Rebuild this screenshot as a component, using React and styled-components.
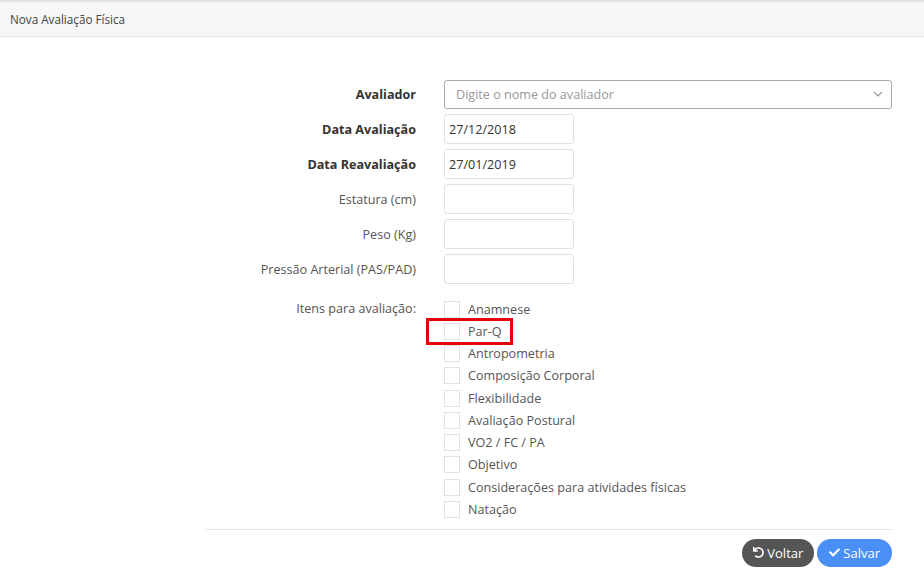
import React from "react";
import styled, { createGlobalStyle } from "styled-components";
import { FaUndo, FaCheck } from "react-icons/fa";

const GlobalStyle = createGlobalStyle`
  html, body {
    margin: 0;
    padding: 0;
    background: #ffffff;
    font-family: "Open Sans", "Liberation Sans", sans-serif;
    color: #333333;
  }
  * {
    box-sizing: border-box;
  }
`;

const Page = styled.div`
  width: 924px;
  min-height: 577px;
  background: #ffffff;
`;

const Header = styled.div`
  height: 37px;
  border-top: 2px solid #e1e2e8;
  border-bottom: 1px solid #e3e3e3;
  background: #f7f7f7;
  padding-left: 10px;
  display: flex;
  align-items: center;
  font-size: 11.7px;
  color: #444444;
`;

const Body = styled.div`
  padding: 42px 32px 0 205px;
`;

const Form = styled.div`
  display: flex;
  flex-direction: column;
  gap: 5px;
`;

const Row = styled.div`
  display: grid;
  grid-template-columns: 211px 1fr;
  column-gap: 28px;
  align-items: center;
  height: 30px;
`;

const Label = styled.label`
  text-align: right;
  font-size: 12.6px;
  font-weight: ${(p) => (p.$bold ? 700 : 400)};
  color: ${(p) => (p.$bold ? "#333333" : "#555555")};
`;

const SelectBox = styled.div`
  height: 29px;
  border: 1px solid #a9a9a9;
  border-radius: 3px;
  display: flex;
  align-items: center;
  justify-content: space-between;
  padding: 0 8px 0 11px;
  font-size: 12.6px;
  color: #999999;
`;

const Input = styled.div`
  width: 130px;
  height: 30px;
  border: 1px solid #e0e0e0;
  border-radius: 3px;
  display: flex;
  align-items: center;
  padding-left: 4px;
  font-size: 12.6px;
  color: #333333;
`;

const ItemsRow = styled.div`
  display: grid;
  grid-template-columns: 211px 1fr;
  column-gap: 28px;
  margin-top: 14px;
`;

const ItemsLabel = styled(Label)`
  line-height: 22.25px;
`;

const CheckList = styled.div`
  display: flex;
  flex-direction: column;
`;

const CheckItem = styled.div`
  position: relative;
  height: 22.25px;
  display: flex;
  align-items: center;
  gap: 8px;
  font-size: 12.6px;
  color: #555555;
`;

const Box = styled.span`
  width: 16px;
  height: 17px;
  border: 1px solid #e2e2e2;
  background: #ffffff;
`;

const Highlight = styled.span`
  position: absolute;
  left: -18px;
  top: -2px;
  width: 87px;
  height: 27px;
  border: 3px solid #e5000b;
  pointer-events: none;
`;

const Rule = styled.hr`
  margin: 8px 0 0 0;
  border: 0;
  border-top: 1px solid #e5e5e5;
`;

const Actions = styled.div`
  display: flex;
  justify-content: flex-end;
  gap: 3px;
  margin-top: 9px;
`;

const Button = styled.button`
  height: 28px;
  border: 0;
  border-radius: 14px;
  padding: 0 ${(p) => (p.$variant === "primary" ? "12px" : "11px")};
  display: flex;
  align-items: center;
  gap: 3px;
  font-family: "Open Sans", "Liberation Sans", sans-serif;
  font-size: 13px;
  color: #ffffff;
  background: ${(p) => (p.$variant === "primary" ? "#4a8ff5" : "#555555")};

  svg {
    width: 11px;
    height: 11px;
  }
`;

const Chevron = () => (
  <svg width="10" height="6" viewBox="0 0 10 6">
    <path d="M1 1l4 4 4-4" fill="none" stroke="#999" strokeWidth="1.2" />
  </svg>
);

const items = [
  "Anamnese",
  "Par-Q",
  "Antropometria",
  "Composição Corporal",
  "Flexibilidade",
  "Avaliação Postural",
  "VO2 / FC / PA",
  "Objetivo",
  "Considerações para atividades físicas",
  "Natação",
];

const App = () => {
  return (
    <Page>
      <GlobalStyle />
      <Header>Nova Avaliação Física</Header>
      <Body>
        <Form>
          <Row>
            <Label $bold>Avaliador</Label>
            <SelectBox>
              <span>Digite o nome do avaliador</span>
              <Chevron />
            </SelectBox>
          </Row>
          <Row>
            <Label $bold>Data Avaliação</Label>
            <Input>27/12/2018</Input>
          </Row>
          <Row>
            <Label $bold>Data Reavaliação</Label>
            <Input>27/01/2019</Input>
          </Row>
          <Row>
            <Label>Estatura (cm)</Label>
            <Input />
          </Row>
          <Row>
            <Label>Peso (Kg)</Label>
            <Input />
          </Row>
          <Row>
            <Label>Pressão Arterial (PAS/PAD)</Label>
            <Input />
          </Row>
        </Form>
        <ItemsRow>
          <ItemsLabel>Itens para avaliação:</ItemsLabel>
          <CheckList>
            {items.map((item) => (
              <CheckItem key={item}>
                <Box />
                {item}
                {item === "Par-Q" && <Highlight />}
              </CheckItem>
            ))}
          </CheckList>
        </ItemsRow>
        <Rule />
        <Actions>
          <Button>
            <FaUndo />
            Voltar
          </Button>
          <Button $variant="primary">
            <FaCheck />
            Salvar
          </Button>
        </Actions>
      </Body>
    </Page>
  );
};

export default App;
